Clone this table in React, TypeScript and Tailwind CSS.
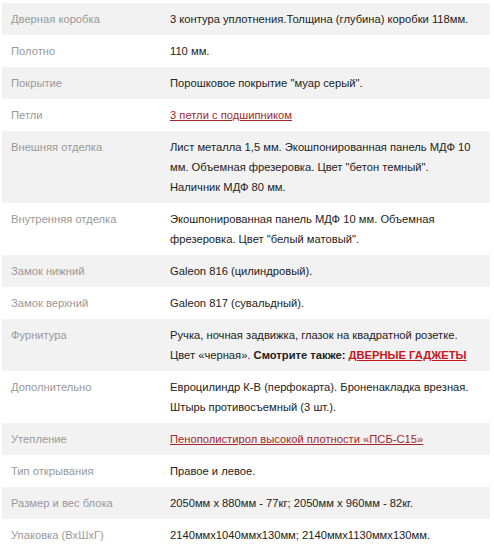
import React from "react";

type Row = { label: string; value: React.ReactNode };

const link = "text-[#a3282b] underline";

const rows: Row[] = [
  { label: "Дверная коробка", value: "3 контура уплотнения.Толщина (глубина) коробки 118мм." },
  { label: "Полотно", value: "110 мм." },
  { label: "Покрытие", value: 'Порошковое покрытие "муар серый".' },
  { label: "Петли", value: <a className={link} href="#">3 петли с подшипником</a> },
  {
    label: "Внешняя отделка",
    value: 'Лист металла 1,5 мм. Экошпонированная панель МДФ 10 мм. Объемная фрезеровка. Цвет "бетон темный". Наличник МДФ 80 мм.',
  },
  {
    label: "Внутренняя отделка",
    value: 'Экошпонированная панель МДФ 10 мм. Объемная фрезеровка. Цвет "белый матовый".',
  },
  { label: "Замок нижний", value: "Galeon 816 (цилиндровый)." },
  { label: "Замок верхний", value: "Galeon 817 (сувальдный)." },
  {
    label: "Фурнитура",
    value: (
      <>
        Ручка, ночная задвижка, глазок на квадратной розетке. Цвет «черная».{" "}
        <b className="font-bold text-[#222]">Смотрите также: </b>
        <a className="font-bold text-[#c8161d] underline" href="#">ДВЕРНЫЕ ГАДЖЕТЫ</a>
      </>
    ),
  },
  { label: "Дополнительно", value: "Евроцилиндр К-В (перфокарта). Броненакладка врезная. Штырь противосъемный (3 шт.)." },
  { label: "Утепление", value: <a className={link} href="#">Пенополистирол высокой плотности «ПСБ-С15»</a> },
  { label: "Тип открывания", value: "Правое и левое." },
  { label: "Размер и вес блока", value: "2050мм х 880мм - 77кг; 2050мм х 960мм - 82кг." },
  { label: "Упаковка (ВхШхГ)", value: "2140ммх1040ммх130мм; 2140ммх1130ммх130мм." },
];

export default function App() {
  return (
    <div className="bg-white w-[494px] h-[547px] overflow-hidden pt-[3px] pl-[2px]" style={{ fontFamily: '"Liberation Sans", Arial, sans-serif' }}>
      <div className="w-[488px] flex flex-col text-[11.2px] leading-[20px]">
        {rows.map((r, i) => (
          <div key={i} className={`flex ${i % 2 === 0 ? "bg-[#f2f2f2]" : "bg-white"}`}>
            <div className="w-[160px] shrink-0 py-[6px] pl-[9px] pr-2 text-[#999]">{r.label}</div>
            <div className="flex-1 py-[6px] pl-2 pr-[10px] text-[#222]">{r.value}</div>
          </div>
        ))}
      </div>
    </div>
  );
}
